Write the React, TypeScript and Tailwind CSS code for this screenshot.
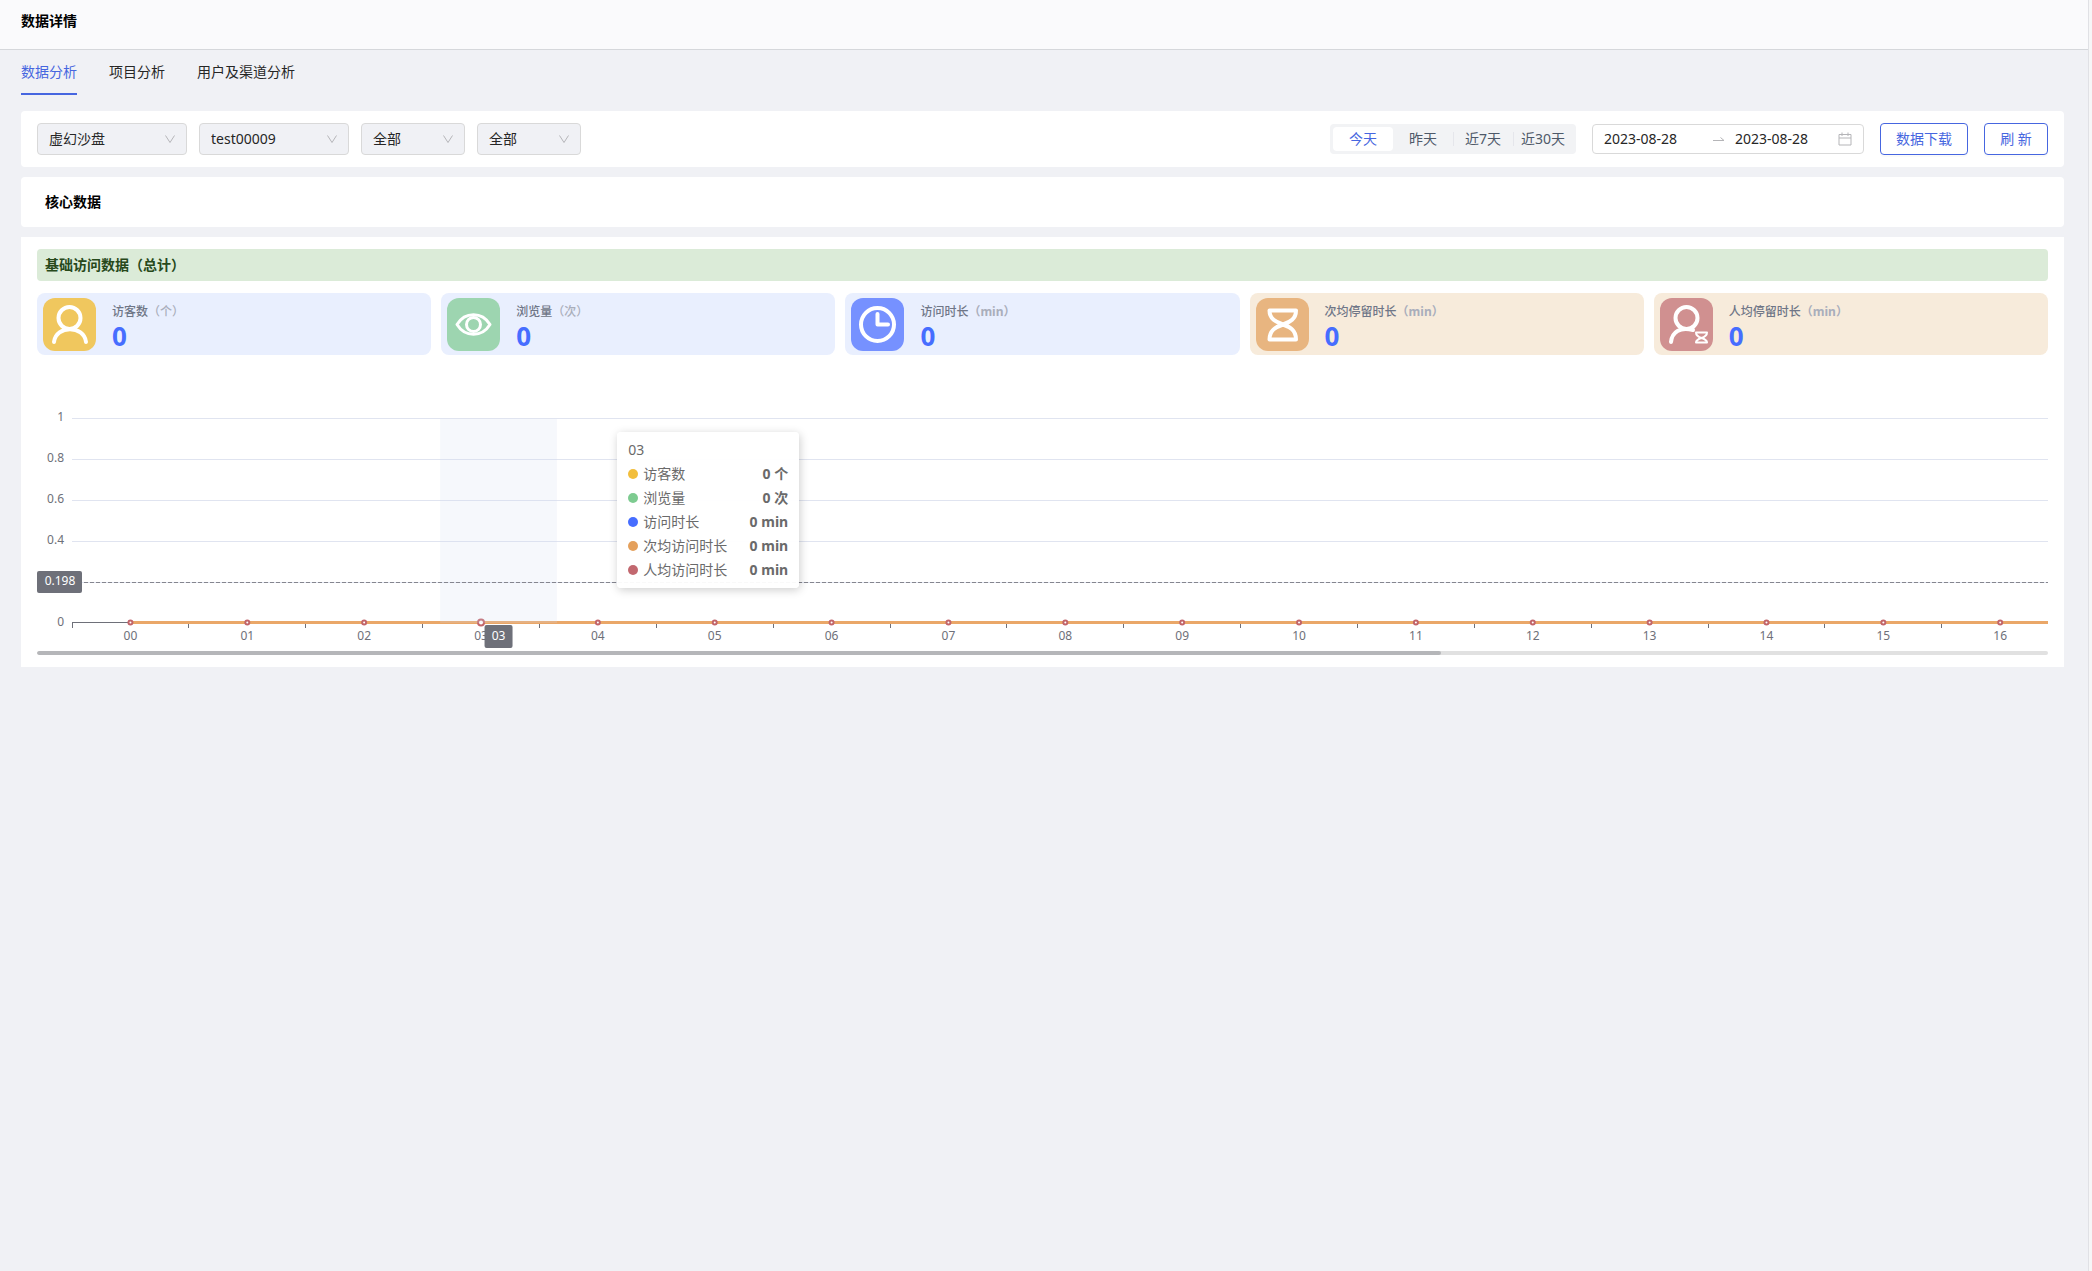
import { ReactNode } from 'react';

const font = "font-['Noto_Sans','Noto_Sans_CJK_SC',sans-serif]";

const tabs = ['数据分析', '项目分析', '用户及渠道分析'];

const filters = [
    { label: '项目类型', value: '虚幻沙盘', width: 'w-[150px]' },
    { label: '项目', value: 'test00009', width: 'w-[150px]' },
    { label: '用户', value: '全部', width: 'w-[104px]' },
    { label: '渠道', value: '全部', width: 'w-[104px]' },
];

const ranges = ['今天', '昨天', '近7天', '近30天'];

const PersonIcon = () => (
    <>
        <circle cx="26.500" cy="20" r="11" />
        <path d="M11 44C13 27 41 27 43 44" />
    </>
);

const EyeIcon = () => (
    <g strokeWidth="3">
        <path d="M10 26.500C18 13.500 35 13.500 43 26.500C35 39.500 18 39.500 10 26.500Z" />
        <circle cx="26.500" cy="26.500" r="7" />
    </g>
);

const ClockIcon = () => (
    <>
        <circle cx="26.500" cy="26.500" r="16.500" />
        <path d="M26.500 16V26.500H37" />
    </>
);

const HourglassIcon = () => (
    <path d="M13.500 12.500H40C40 21 34 24 27 26.500C34 29 40 32 40 41.500H13.500C13.500 32 20 29 27 26.500C20 24 13.500 21 13.500 12.500Z" />
);

const PersonTimeIcon = () => (
    <>
        <circle cx="26.500" cy="20" r="11" />
        <path d="M11 44C12 34 20 28.500 33 32" />
        <path strokeWidth="2" d="M36 34.500H47C47 38 44.500 39 41.500 40C44.500 41 47 42 47 44.500H36C36 42 38.500 41 41.500 40C38.500 39 36 38 36 34.500Z" />
    </>
);

const cards: { label: string; unit: string; unitClass: string; icon: ReactNode; bg: string; tile: string }[] = [
    { label: '访客数', unit: '（个）', unitClass: 'font-medium', icon: <PersonIcon />, bg: 'bg-[#e9effe]', tile: 'bg-[#f0c75e]' },
    { label: '浏览量', unit: '（次）', unitClass: 'font-medium', icon: <EyeIcon />, bg: 'bg-[#e9effe]', tile: 'bg-[#9dd5b0]' },
    { label: '访问时长', unit: '（min）', unitClass: 'font-bold', icon: <ClockIcon />, bg: 'bg-[#e9effe]', tile: 'bg-[#7691ff]' },
    { label: '次均停留时长', unit: '（min）', unitClass: 'font-bold', icon: <HourglassIcon />, bg: 'bg-[#f7ebdb]', tile: 'bg-[#e8b580]' },
    { label: '人均停留时长', unit: '（min）', unitClass: 'font-bold', icon: <PersonTimeIcon />, bg: 'bg-[#f7ebdb]', tile: 'bg-[#d09090]' },
];

const tooltipRows = [
    { name: '访客数', value: '0 个', dot: 'bg-[#f2be3c]' },
    { name: '浏览量', value: '0 次', dot: 'bg-[#7dcb90]' },
    { name: '访问时长', value: '0 min', dot: 'bg-[#466dff]' },
    { name: '次均访问时长', value: '0 min', dot: 'bg-[#e4a05c]' },
    { name: '人均访问时长', value: '0 min', dot: 'bg-[#c2686f]' },
];

const hours = Array.from({ length: 17 }, (_, i) => String(i).padStart(2, '0'));
const yTicks = ['1', '0.8', '0.6', '0.4', '', '0'];

// one category's share of the visible plot, in percent
const STEP = 5.914;
const pct = (n: number) => `${n * STEP}%`;

const Chart = () => (
    <div className="relative pl-[35px]">
        <svg className="block h-[281px] w-full overflow-visible" role="img" aria-label="基础访问数据">
            {yTicks.map((label, i) => (
                <g key={i}>
                    {i < 5 && (
                        <line x1="0" x2="100%" y1={48.5 + i * 41} y2={48.5 + i * 41} stroke="#e0e4f0" />
                    )}
                    <text x="-8" y={51 + i * 41} textAnchor="end" className="fill-[#6e7079] text-xs">
                        {label}
                    </text>
                </g>
            ))}

            <line x1="0" x2={pct(0.5)} y1="252.500" y2="252.500" stroke="#6e7079" shapeRendering="crispEdges" />
            {hours.map((hour, i) => (
                <g key={hour}>
                    <line x1={pct(i)} x2={pct(i)} y1="253" y2="258" stroke="#6e7079" shapeRendering="crispEdges" />
                    <text x={pct(i + 0.5)} y="270" textAnchor="middle" className="fill-[#6e7079] text-xs">
                        {hour}
                    </text>
                </g>
            ))}

            <line x1={pct(0.5)} x2="100%" y1="252.500" y2="252.500" stroke="#eaa768" strokeWidth="3" />
            {hours.map((hour, i) => (
                <circle key={hour} cx={pct(i + 0.5)} cy="252.500" r={i === 3 ? 3 : 2} fill="#fff" stroke="#c2656a" strokeWidth="2" />
            ))}

            <rect x={pct(3.15)} y="49" width={pct(1)} height="204" fill="#d2dbee" fillOpacity="0.2" />
            <line x1="0" x2="100%" y1="212.500" y2="212.500" stroke="#85868f" strokeDasharray="4 2" />

            <rect x="-35" y="201" width="45" height="22" rx="2" fill="#6e7079" />
            <text x="-12" y="215" textAnchor="middle" className="fill-white text-xs">0.198</text>

            <svg x={pct(3.65)} y="255" className="overflow-visible">
                <rect x="-14" y="0" width="28" height="23" rx="2" fill="#6e7079" />
                <text x="0" y="15" textAnchor="middle" className="fill-white text-xs">03</text>
            </svg>
        </svg>

        <div className="absolute top-[62px] left-[calc(29%-3px)] w-[182px] rounded bg-white/95 px-[11px] pt-2 pb-[6px] text-sm text-[#6a6a6a] shadow-[1px_2px_10px_rgba(0,0,0,0.2)]">
            <p className="mb-[2px] leading-5">03</p>
            <ul>
                {tooltipRows.map((row) => (
                    <li key={row.name} className="flex h-6 items-center">
                        <span className={`mr-[5px] size-[10px] rounded-full ${row.dot}`} />
                        {row.name}
                        <span className="ml-auto font-bold">{row.value}</span>
                    </li>
                ))}
            </ul>
        </div>
    </div>
);

const FilterSelect = ({ label, value, width }: { label: string; value: string; width: string }) => (
    <div className={`relative ${width}`}>
        <select
            aria-label={label}
            className="h-8 w-full appearance-none rounded-sm border border-[#d9d9d9] bg-[#f0f1f5] px-[11px] text-sm text-[#262626]"
        >
            <option>{value}</option>
        </select>
        <svg className="pointer-events-none absolute top-[11px] right-3 size-[10px]" viewBox="0 0 10 10" fill="none" stroke="#b5b5b8">
            <path d="M0.500 1.500L5 8.500L9.500 1.500" />
        </svg>
    </div>
);

const DateRange = () => (
    <div className="flex h-[30px] w-[272px] items-center rounded-sm border border-[#d9d9d9] bg-white px-[11px] text-sm text-[#262626]">
        <input aria-label="开始日期" className="w-[100px] outline-none" defaultValue="2023-08-28" />
        <svg className="mr-[10px] ml-[9px] size-3 shrink-0" viewBox="0 0 12 12" fill="none" stroke="#b5b5b8">
            <path d="M0 7.500H11L7.500 4.500" />
        </svg>
        <input aria-label="结束日期" className="w-[100px] outline-none" defaultValue="2023-08-28" />
        <svg className="ml-auto size-[14px] shrink-0" viewBox="0 0 14 14" fill="none" stroke="#b5b5b8">
            <path d="M1 2.500H13V13H1ZM1 6H13M4 0.500V4M10 0.500V4" />
        </svg>
    </div>
);

const App = () => {
    return (
        <div className={`min-h-screen bg-[#f6f6f7] text-sm text-[#262626] ${font}`}>
            <div className="mr-[3px] min-h-screen border-r border-[#e0e1e5] bg-[#f0f1f5]">
                <header className="h-[50px] border-b border-[#d5d7db] bg-[#fafafc] px-[21px] pt-[10px]">
                    <h1 className="font-bold leading-[22px] text-black">数据详情</h1>
                </header>

                <nav className="mr-6 ml-[21px] flex h-[45px] gap-8" aria-label="数据详情">
                    {tabs.map((tab, i) => (
                        <a
                            key={tab}
                            href="#"
                            className={`pt-[11px] leading-[22px] ${i === 0 ? 'border-b-2 border-[#4666e0] text-[#4666e0]' : ''}`}
                        >
                            {tab}
                        </a>
                    ))}
                </nav>

                <main className="mt-4 mr-6 ml-[21px] flex flex-col gap-[10px]">
                    <section className="flex items-center justify-between rounded-sm bg-white px-4 py-3">
                        <div className="flex gap-3">
                            {filters.map((filter, i) => (
                                <FilterSelect key={i} {...filter} />
                            ))}
                        </div>

                        <div className="flex items-center gap-4">
                            <div className="flex h-[30px] items-center rounded-sm bg-[#f2f3f5] p-[3px]">
                                {ranges.map((range, i) => (
                                    <div key={range} className="relative">
                                        {i > 1 && <span className="absolute top-[5px] left-0 h-[14px] w-px bg-[#e5e6eb]" />}
                                        <button className={`h-6 w-[60px] ${i === 0 ? 'rounded-sm bg-white text-[#4666e0]' : 'text-[#4e5969]'}`}>
                                            {range}
                                        </button>
                                    </div>
                                ))}
                            </div>
                            <DateRange />
                            <button className="h-8 w-[88px] rounded-sm border border-[#4666e0] text-[#4666e0] shadow-[0_2px_0_rgba(0,0,0,0.02)]">
                                数据下载
                            </button>
                            <button className="h-8 w-16 rounded-sm border border-[#4666e0] text-[#4666e0] shadow-[0_2px_0_rgba(0,0,0,0.02)]">
                                刷 新
                            </button>
                        </div>
                    </section>

                    <section className="rounded-sm bg-white px-6 py-[14px]">
                        <h2 className="font-bold leading-[22px] text-black">核心数据</h2>
                    </section>

                    <section className="bg-white px-4 py-3">
                        <h3 className="rounded bg-[#dbebd8] px-2 font-bold leading-8 text-[#27491b]">基础访问数据（总计）</h3>

                        <div className="mt-3 grid grid-cols-5 gap-[10px]">
                            {cards.map((card) => (
                                <div key={card.label} className={`flex h-[62px] items-center rounded-lg px-[6px] ${card.bg}`}>
                                    <div className={`size-[53px] rounded-xl ${card.tile}`}>
                                        <svg viewBox="0 0 53 53" fill="none" stroke="#fff" strokeWidth="4" strokeLinecap="round" strokeLinejoin="round">
                                            {card.icon}
                                        </svg>
                                    </div>
                                    <div className="ml-4 pt-2">
                                        <p className="text-xs font-medium leading-4 text-[#6f7687]">
                                            {card.label}
                                            <span className={`text-[#a9aebb] ${card.unitClass}`}>{card.unit}</span>
                                        </p>
                                        <p className="text-[26px] font-bold leading-8 text-[#466dff]">0</p>
                                    </div>
                                </div>
                            ))}
                        </div>

                        <div className="mt-[15px]">
                            <Chart />
                        </div>
                        <div className="h-1 overflow-hidden rounded-sm bg-[#e1e1e1]">
                            <div className="h-full w-[69.8%] rounded-sm bg-[#b5b6b9]" />
                        </div>
                    </section>
                </main>
            </div>
        </div>
    );
};

export default App;
